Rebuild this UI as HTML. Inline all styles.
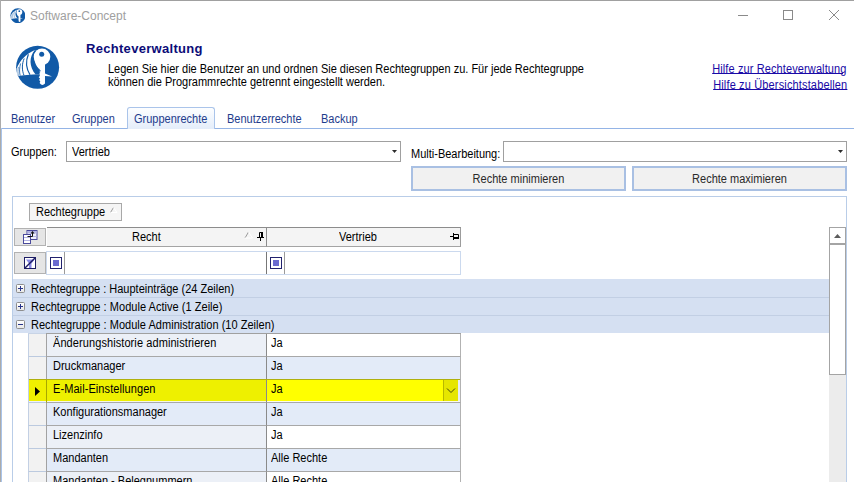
<!DOCTYPE html>
<html lang="de">
<head>
<meta charset="utf-8">
<title>Software-Concept</title>
<style>
*{box-sizing:border-box;margin:0;padding:0}
html,body{width:854px;height:482px;overflow:hidden;background:#fff}
body{position:relative;font-family:"Liberation Sans",sans-serif;font-size:12px;color:#000;line-height:14px}
.a{position:absolute;white-space:nowrap}
.t{position:absolute;white-space:nowrap;line-height:14px;font-size:12px;transform:scaleX(.917);transform-origin:0 0}
.tr{transform-origin:100% 0}
.tc{transform-origin:50% 0;text-align:center}
#bt{left:0;top:0;width:854px;height:1px;background:#a0a0a0}
#bl{left:0;top:0;width:1px;height:482px;background:#ababab}
#title{left:30px;top:9px;font-size:12px;line-height:15px;color:#a0a0a0;transform:none}
#h1{left:86px;top:41px;font-size:13px;line-height:15px;font-weight:bold;color:#0c0c78;letter-spacing:0.3px;transform:none}
.lnk{color:#1a0aa6;text-decoration:underline;text-underline-offset:0.300px}
.tab{color:#1e3c8c}
#tabsel{left:127px;top:107px;width:88px;height:22px;border:1px solid #aac4ea;border-bottom:none;border-radius:3px 3px 0 0;background:linear-gradient(#fdfeff,#e4edfa)}
#tabline{left:1px;top:128px;width:853px;height:1px;background:#94b4e6}
#tabline2{left:1px;top:128px;width:1px;height:354px;background:#a9c4ea}
.combo{border:1px solid #a0a0a0;background:#fff;height:21px}
.arr{position:absolute;width:0;height:0;border-left:2.500px solid transparent;border-right:2.500px solid transparent;border-top:3px solid #303030}
.btn{border:2px solid #a9c0e3;background:#f1f1f1;height:25px}
#grid{left:12px;top:196px;width:835px;height:300px;border:1px solid #b9cde8;background:#fff}
.hdr{background:#f4f4f4;border-top:1px solid #8c8c8c;border-bottom:1px solid #a4a4a4;height:20px}
.grp{left:13px;width:816px;background:#d5e0f2;border-bottom:1px solid #c2cfe4}
.pm{position:absolute;left:3px;width:9px;height:9px;border:1px solid #8e8e8e;border-radius:1.500px;background:linear-gradient(#fff,#e8e8e8)}
.pm:before{content:"";position:absolute;left:1px;top:3px;width:5px;height:1px;background:#27348b}
.pm.p:after{content:"";position:absolute;left:3px;top:1px;width:1px;height:5px;background:#27348b}
.row{left:28px;width:433px;height:23px}
.row .s{position:absolute;left:0;top:0;width:18px;height:23px;background:#f2f2f2;border-left:1px solid #c3d0e4;border-bottom:1px solid #bccadf}
.row .c1{position:absolute;left:18px;top:0;width:221px;height:23px;background:#ecf0f7;border-left:1px solid #a2a2a2;border-bottom:1px solid #a8a8a8}
.row .c2{position:absolute;left:238px;top:0;width:195px;height:23px;background:#fff;border-left:1px solid #8a8a8a;border-right:1px solid #b2b2b2;border-bottom:1px solid #a8a8a8}
.row.alt .c1,.row.alt .c2{background:#e3ebf8}
.row.sel .s{background:#f0f000;box-shadow:inset 0 -1px 0 #eef2f8}
.row.sel .c1{background:#eef000;border-left-color:#a8a800;box-shadow:inset 0 -1px 0 #f6f7e6}
.row.sel .c2{background:#ffff00;box-shadow:inset 0 -1px 0 #fbfbee}
</style>
</head>
<body>
<div class="a" id="bt"></div>
<div class="a" id="bl"></div>

<!-- title bar -->
<svg class="a" style="left:9.600px;top:7.600px" width="15.700" height="15.700" viewBox="0 0 45 45">
  <circle cx="22.600" cy="22.300" r="21.500" fill="#115aa7"/>
  <path d="M1.700 23.500 C5 15 11 9 19.500 5.200 C23 4.500 25 8 24 14 L24.500 29.200 C15 29.400 8 30 2.300 31.200 C1.700 28.500 1.500 26 1.700 23.500 Z" fill="#fff"/>
  <path d="M19.800 5 C14 12 14 21.500 20.600 29.600 L24.700 29.300 L24.700 24.300 C21.500 21.500 19.300 17.500 19.500 13 C19.600 10 20.300 8 21.800 5.600 Z" fill="#115aa7"/>
  <path d="M13.400 9.300 C10.600 16 10.800 23 15 29.800" stroke="#115aa7" stroke-width="1.200" fill="none"/>
  <path d="M9.200 13.500 C6.800 19 6.800 25 9 30.400" stroke="#115aa7" stroke-width="1" fill="none"/>
  <path d="M5.600 18.500 C4.300 23 4.300 27 5.200 30.800" stroke="#115aa7" stroke-width=".8" fill="none"/>
  <path d="M3.400 22 C2.800 25 2.800 28 3.300 31" stroke="#115aa7" stroke-width=".6" fill="none"/>
  <path d="M30 28.600 L37 31.600 L30 31 Z" fill="#fff"/>
  <circle cx="27" cy="11.800" r="8.300" fill="#fff"/>
  <path d="M21.500 17 C21.500 20 22.800 22.300 24.600 24.200 L25.800 25.900 L24.600 26.800 L25.200 28 L24.300 28.800 L24.900 30 C24.700 31.500 24 32 23.700 32.300 L25 33.500 L24.200 35 L25.300 36.400 L24.600 38 Q27.200 41.500 30 38.500 L30 18 Z" fill="#fff"/>
  <circle cx="26.700" cy="9.300" r="2.500" fill="#115aa7"/>
</svg>
<div class="t" id="title">Software-Concept</div>
<svg class="a" style="left:730px;top:2px" width="124" height="28" viewBox="0 0 124 28">
  <path d="M8 13.5 H18" stroke="#8a8a8a" stroke-width="1" fill="none"/>
  <rect x="53.5" y="8.500" width="9" height="9" stroke="#8a8a8a" stroke-width="1" fill="none"/>
  <path d="M99 8 L109 18 M109 8 L99 18" stroke="#8a8a8a" stroke-width="1" fill="none"/>
</svg>

<!-- header -->
<svg class="a" style="left:15px;top:45px" width="45" height="45" viewBox="0 0 45 45">
  <circle cx="22.600" cy="22.300" r="21.500" fill="#115aa7"/>
  <path d="M1.700 23.500 C5 15 11 9 19.500 5.200 C23 4.500 25 8 24 14 L24.500 29.200 C15 29.400 8 30 2.300 31.200 C1.700 28.500 1.500 26 1.700 23.500 Z" fill="#fff"/>
  <path d="M19.800 5 C14 12 14 21.500 20.600 29.600 L24.700 29.300 L24.700 24.300 C21.500 21.500 19.300 17.500 19.500 13 C19.600 10 20.300 8 21.800 5.600 Z" fill="#115aa7"/>
  <path d="M13.400 9.300 C10.600 16 10.800 23 15 29.800" stroke="#115aa7" stroke-width="1.200" fill="none"/>
  <path d="M9.200 13.500 C6.800 19 6.800 25 9 30.400" stroke="#115aa7" stroke-width="1" fill="none"/>
  <path d="M5.600 18.500 C4.300 23 4.300 27 5.200 30.800" stroke="#115aa7" stroke-width=".8" fill="none"/>
  <path d="M3.400 22 C2.800 25 2.800 28 3.300 31" stroke="#115aa7" stroke-width=".6" fill="none"/>
  <path d="M30 28.600 L37 31.600 L30 31 Z" fill="#fff"/>
  <circle cx="27" cy="11.800" r="8.300" fill="#fff"/>
  <path d="M21.500 17 C21.500 20 22.800 22.300 24.600 24.200 L25.800 25.900 L24.600 26.800 L25.200 28 L24.300 28.800 L24.900 30 C24.700 31.500 24 32 23.700 32.300 L25 33.500 L24.200 35 L25.300 36.400 L24.600 38 Q27.200 41.500 30 38.500 L30 18 Z" fill="#fff"/>
  <circle cx="26.700" cy="9.300" r="2.500" fill="#115aa7"/>
</svg>
<div class="t" id="h1">Rechteverwaltung</div>
<div class="t" style="left:108px;top:62px">Legen Sie hier die Benutzer an und ordnen Sie diesen Rechtegruppen zu. Für jede Rechtegruppe</div>
<div class="t" style="left:108px;top:75px">können die Programmrechte getrennt eingestellt werden.</div>
<div class="t tr lnk" style="right:7px;top:62px;letter-spacing:.12px">Hilfe zur Rechteverwaltung</div>
<div class="t tr lnk" style="right:7px;top:78px;letter-spacing:.16px">Hilfe zu Übersichtstabellen</div>

<!-- tabs -->
<div class="a" id="tabline"></div>
<div class="a" id="tabline2"></div>
<div class="a" id="tabsel"></div>
<div class="t tab" style="left:11px;top:112px">Benutzer</div>
<div class="t tab" style="left:72px;top:112px">Gruppen</div>
<div class="t tab" style="left:134px;top:112px">Gruppenrechte</div>
<div class="t tab" style="left:227px;top:112px">Benutzerrechte</div>
<div class="t tab" style="left:321px;top:112px">Backup</div>

<!-- filters -->
<div class="t" style="left:11px;top:145px">Gruppen:</div>
<div class="a combo" style="left:66px;top:141px;width:335px"></div>
<div class="t" style="left:72px;top:145px">Vertrieb</div>
<div class="t" style="left:411px;top:147px">Multi-Bearbeitung:</div>
<div class="a combo" style="left:503px;top:141px;width:344px"></div>
<svg class="a" style="left:392px;top:150px" width="5" height="3" viewBox="0 0 5 3"><path d="M0 0 H5 L2.500 3 Z" fill="#2c2c2c"/></svg>
<svg class="a" style="left:838px;top:150px" width="5" height="3" viewBox="0 0 5 3"><path d="M0 0 H5 L2.500 3 Z" fill="#2c2c2c"/></svg>
<div class="a btn" style="left:411px;top:166px;width:215px"></div>
<div class="t tc" style="left:411px;width:215px;top:172px;color:#2a2a2a">Rechte minimieren</div>
<div class="a btn" style="left:632px;top:166px;width:215px"></div>
<div class="t tc" style="left:632px;width:215px;top:172px;color:#2a2a2a">Rechte maximieren</div>

<!-- grid -->
<div class="a" id="grid"></div>
<div class="a" style="left:29px;top:203px;width:93px;height:18px;border:1px solid #a8a8a8;background:#f5f5f5"></div>
<div class="t" style="left:36px;top:205px">Rechtegruppe</div>
<svg class="a" style="left:110px;top:207px" width="8" height="7" viewBox="0 0 8 7"><path d="M0.500 5.500 L3.500 0.500" stroke="#9a9a9a" stroke-width="1" fill="none"/><path d="M3.500 0.500 L7 5.500 H0.500" stroke="#fff" stroke-width="1" fill="none"/></svg>

<div class="a" style="left:14px;top:228px;width:32px;height:18px;background:#e5e5e5;border:1px solid #b2b2b2"></div>
<svg class="a" style="left:22px;top:229px" width="16" height="16" viewBox="0 0 16 16">
  <rect x="5" y="1.500" width="10" height="9" fill="#eeeefb" stroke="#4a4a9c"/>
  <rect x="5.500" y="2" width="9" height="2.500" fill="#b4b4e4"/>
  <path d="M9 7.500 H14.500" stroke="#b4b4e4"/>
  <rect x="1.500" y="5.500" width="7" height="9" fill="#fff" stroke="#4a4a9c"/>
  <path d="M2 8.500 H8 M2 11.500 H8" stroke="#b4b4e4"/>
  <path d="M5.500 7.500 H10.500 V4" stroke="#101010" fill="none"/>
  <path d="M8.500 4.500 L10.500 2 L12.500 4.500 Z" fill="#101010"/>
</svg>
<div class="a hdr" style="left:47px;top:227px;width:220px;border-right:1px solid #8c8c8c"></div>
<div class="a hdr" style="left:267px;top:227px;width:194px;border-right:1px solid #9c9c9c"></div>
<div class="t" style="left:132px;top:230px">Recht</div>
<div class="t" style="left:339px;top:230px">Vertrieb</div>
<svg class="a" style="left:244px;top:231px" width="10" height="8" viewBox="0 0 10 8"><path d="M1 7 L4.500 1" stroke="#9a9a9a" stroke-width="1" fill="none"/><path d="M4.500 1 L8.500 7 H1" stroke="#fff" stroke-width="1" fill="none"/></svg>
<svg class="a" style="left:256px;top:231px" width="9" height="11" viewBox="0 0 9 11"><path d="M3.500 6 V1.500 H6 V6" stroke="#000" fill="none"/><rect x="5" y="1" width="2" height="5" fill="#000"/><rect x="1" y="6" width="7" height="1" fill="#000"/><rect x="4" y="7" width="1" height="3" fill="#000"/></svg>
<svg class="a" style="left:449px;top:232px" width="12" height="9" viewBox="0 0 12 9"><rect x="1" y="4" width="3" height="1" fill="#000"/><rect x="4" y="1" width="1" height="7" fill="#000"/><path d="M5 2.500 H9.500 V6" stroke="#000" fill="none"/><rect x="5" y="5" width="5" height="2" fill="#000"/></svg>

<div class="a" style="left:14px;top:252px;width:32px;height:22px;background:#e5e5e5;border:1px solid #b2b2b2"></div>
<svg class="a" style="left:24px;top:257px" width="12" height="12" viewBox="0 0 12 12">
  <rect x="0.500" y="0.500" width="11" height="11" fill="#fff" stroke="#1c1c64"/>
  <path d="M2 2.500 H10.500 L7.500 6.500 V11 H5 V6.500 Z" fill="#8a8ae6"/>
  <path d="M0.500 11.500 L11.500 0.500" stroke="#1c1c64" stroke-width="1.400"/>
</svg>
<div class="a" style="left:46px;top:251px;width:415px;height:24px;background:#fff;border:1px solid #cbd9ee"></div>
<div class="a" style="left:64px;top:252px;width:1px;height:22px;background:#9a9a9a"></div>
<div class="a" style="left:266px;top:252px;width:1px;height:22px;background:#777"></div>
<div class="a" style="left:284px;top:252px;width:1px;height:22px;background:#9a9a9a"></div>
<div class="a" style="left:50px;top:257px;width:12px;height:12px;border:1px solid #22226e;background:#fff"><i style="position:absolute;left:2px;top:2px;width:6px;height:6px;background:#6a6ad0"></i></div>
<div class="a" style="left:270px;top:257px;width:12px;height:12px;border:1px solid #22226e;background:#fff"><i style="position:absolute;left:2px;top:2px;width:6px;height:6px;background:#6a6ad0"></i></div>

<div class="a grp" style="top:279px;height:19px"><i class="pm p" style="top:5px"></i></div>
<div class="a grp" style="top:298px;height:18px"><i class="pm p" style="top:4px"></i></div>
<div class="a grp" style="top:316px;height:17px;border-bottom:none"><i class="pm" style="top:4px"></i></div>
<div class="t" style="left:31px;top:282px">Rechtegruppe : Haupteinträge (24 Zeilen)</div>
<div class="t" style="left:31px;top:300px;letter-spacing:.035px">Rechtegruppe : Module Active (1 Zeile)</div>
<div class="t" style="left:31px;top:318px;letter-spacing:.03px">Rechtegruppe : Module Administration (10 Zeilen)</div>

<div class="a" style="left:28px;top:333px;width:18px;height:1px;background:#c8d4e6"></div>
<div class="a" style="left:46px;top:333px;width:415px;height:1px;background:#a0a0a0"></div>
<div class="a row" style="top:334px"><div class="s"></div><div class="c1"></div><div class="c2"></div></div>
<div class="a row alt" style="top:357px"><div class="s"></div><div class="c1"></div><div class="c2"></div></div>
<div class="a row sel" style="top:380px"><div class="s"></div><div class="c1"></div><div class="c2"></div></div>
<div class="a row alt" style="top:403px"><div class="s"></div><div class="c1"></div><div class="c2"></div></div>
<div class="a row" style="top:426px"><div class="s"></div><div class="c1"></div><div class="c2"></div></div>
<div class="a row alt" style="top:449px"><div class="s"></div><div class="c1"></div><div class="c2"></div></div>
<div class="a row" style="top:472px"><div class="s"></div><div class="c1"></div><div class="c2"></div></div>
<div class="a" style="left:29px;top:379px;width:431px;height:1px;background:#b0b00c"></div>
<svg class="a" style="left:35px;top:387px" width="5" height="9" viewBox="0 0 5 9"><path d="M0 0 L5 4.500 L0 9 Z" fill="#000"/></svg>
<div class="a" style="left:443px;top:380px;width:15px;height:21px;background:#e6e600;border-left:1px solid #b8b800"></div><div class="a" style="left:458px;top:380px;width:2px;height:21px;background:#e6ecf6"></div>
<svg class="a" style="left:446px;top:387px" width="10" height="7" viewBox="0 0 10 7"><path d="M1 1.500 L5 5.500 L9 1.500" stroke="#45450c" stroke-width="1" fill="none"/></svg>

<div class="t" style="left:53px;top:336px;letter-spacing:.09px">Änderungshistorie administrieren</div><div class="t" style="left:271px;top:336px">Ja</div>
<div class="t" style="left:53px;top:359px">Druckmanager</div><div class="t" style="left:271px;top:359px">Ja</div>
<div class="t" style="left:53px;top:382px;letter-spacing:.09px">E-Mail-Einstellungen</div><div class="t" style="left:271px;top:382px">Ja</div>
<div class="t" style="left:53px;top:405px">Konfigurationsmanager</div><div class="t" style="left:271px;top:405px">Ja</div>
<div class="t" style="left:53px;top:428px">Lizenzinfo</div><div class="t" style="left:271px;top:428px">Ja</div>
<div class="t" style="left:53px;top:451px">Mandanten</div><div class="t" style="left:271px;top:451px">Alle Rechte</div>
<div class="t" style="left:53px;top:474px">Mandanten - Belegnummern</div><div class="t" style="left:271px;top:474px">Alle Rechte</div>

<!-- scrollbar -->
<div class="a" style="left:829px;top:227px;width:17px;height:255px;background:#ececec"></div>
<div class="a" style="left:829px;top:227px;width:17px;height:17px;background:#fff;border:1px solid #a4a4a4"></div>
<div class="a" style="left:829px;top:244px;width:17px;height:131px;background:#fff;border:1px solid #a4a4a4"></div>
<svg class="a" style="left:834px;top:234px" width="7" height="4" viewBox="0 0 7 4"><path d="M0 4 L3.500 0 L7 4 Z" fill="#5c5c5c"/></svg>
</body>
</html>
